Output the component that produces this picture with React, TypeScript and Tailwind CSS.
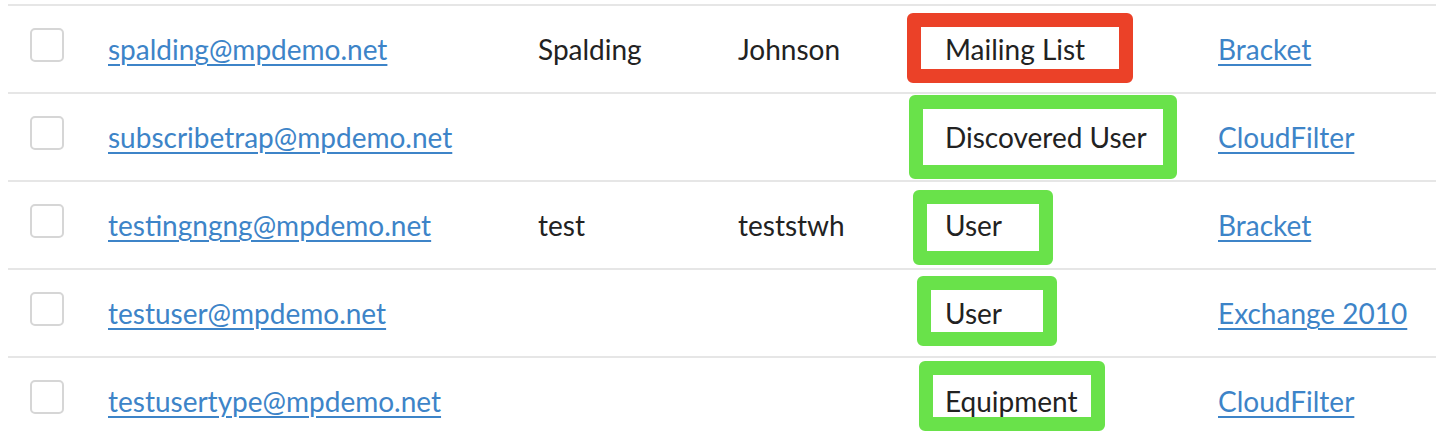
type Contact = {
  email: string;
  first: string;
  last: string;
  type: string;
  box: string;
  source: string;
};

// annotation boxes sit a bit differently on every row, so each one keeps its own offsets
const contacts: Contact[] = [
  {
    email: "spalding@mpdemo.net",
    first: "Spalding",
    last: "Johnson",
    type: "Mailing List",
    box: "left-[-38px] top-[7px] w-[226px] h-[70px] border-[#eb4128]",
    source: "Bracket",
  },
  {
    email: "subscribetrap@mpdemo.net",
    first: "",
    last: "",
    type: "Discovered User",
    box: "left-[-36px] top-[1px] w-[268px] h-[84px] border-[#69e24a]",
    source: "CloudFilter",
  },
  {
    email: "testingngng@mpdemo.net",
    first: "test",
    last: "teststwh",
    type: "User",
    box: "left-[-32px] top-[8px] w-[140px] h-[75px] border-[#69e24a]",
    source: "Bracket",
  },
  {
    email: "testuser@mpdemo.net",
    first: "",
    last: "",
    type: "User",
    box: "left-[-28px] top-[6px] w-[140px] h-[70px] border-[#69e24a]",
    source: "Exchange 2010",
  },
  {
    email: "testusertype@mpdemo.net",
    first: "",
    last: "",
    type: "Equipment",
    box: "left-[-26px] top-[3px] w-[186px] h-[70px] border-[#69e24a]",
    source: "CloudFilter",
  },
];

const linkClass =
  "text-[#3d84c8] underline decoration-[2px] underline-offset-[4px]";

export default function App() {
  return (
    <div className="min-h-[444px] bg-white pt-[4px] pl-[8px] font-['Lato',sans-serif] text-[28px] text-[#222222]">
      {contacts.map((contact) => (
        <div
          key={contact.email}
          className="grid h-[88px] grid-cols-[100px_430px_200px_207px_273px_1fr] items-center border-t-2 border-[#e6e6e6]"
        >
          <div className="pl-[22px]">
            <div className="mb-[9px] h-[34px] w-[34px] rounded-[5px] border-2 border-[#d6d6d6] bg-white" />
          </div>
          <div>
            <a href="#" className={linkClass}>
              {contact.email}
            </a>
          </div>
          <div>{contact.first}</div>
          <div>{contact.last}</div>
          <div className="relative flex items-center self-stretch">
            {contact.type}
            <span
              className={`absolute rounded-[6px] border-[14px] ${contact.box}`}
            />
          </div>
          <div>
            <a href="#" className={linkClass}>
              {contact.source}
            </a>
          </div>
        </div>
      ))}
    </div>
  );
}
